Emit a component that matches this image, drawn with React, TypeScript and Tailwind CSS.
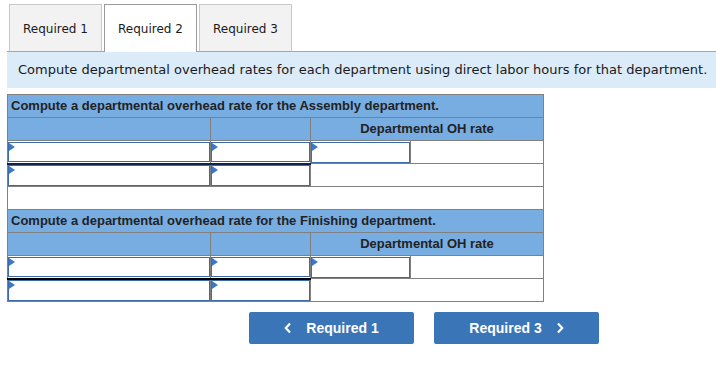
import React from 'react';

const tabs = ['Required 1', 'Required 2', 'Required 3'];

function Marker() {
  return (
    <span className="absolute left-0 top-0 h-0 w-0 border-y-[4px] border-l-[6px] border-y-transparent border-l-[#3a79c9]" />
  );
}

function InputCell() {
  return (
    <td className="p-0 border border-[#808080]">
      <div className="relative h-[21px] border border-[#3b6bab] bg-white">
        <Marker />
      </div>
    </td>
  );
}

function Section({ dept, darkLine }: { dept: string; darkLine: string }) {
  return (
    <>
      <tr className="h-[23px] bg-[#78ade2]">
        <td colSpan={4} className="border border-[#808080] px-[3px] text-[13px] font-bold text-[#222]">
          Compute a departmental overhead rate for the {dept} department.
        </td>
      </tr>
      <tr className="h-[23px] bg-[#78ade2]">
        <td className="border border-[#808080]" />
        <td className="border border-[#808080]" />
        <td colSpan={2} className="border border-[#808080] text-center text-[13px] font-bold text-[#222]">
          Departmental OH rate
        </td>
      </tr>
      <tr className="h-[23px]">
        <td className={`p-0 border border-[#808080] border-b-2 ${darkLine}`}>
          <div className="relative h-[20px] border border-[#3b6bab]">
            <Marker />
          </div>
        </td>
        <td className={`p-0 border border-[#808080] border-b-2 ${darkLine}`}>
          <div className="relative h-[20px] border border-[#3b6bab]">
            <Marker />
          </div>
        </td>
        <InputCell />
        <td className="border border-[#808080]" />
      </tr>
      <tr className="h-[23px]">
        <InputCell />
        <InputCell />
        <td colSpan={2} className="border border-[#808080]" />
      </tr>
    </>
  );
}

export default function App() {
  return (
    <div className="w-[716px] h-[377px] bg-white pl-[7px] pt-[4px] font-['DejaVu_Sans',Verdana,sans-serif] text-[#1a1a1a]">
      {/* Tab strip */}
      <div className="flex gap-[2px] pl-[2px] border-b border-[#a6a6a6]">
        {tabs.map((t, i) => (
          <div
            key={t}
            className={`w-[93px] flex items-center justify-center pt-[1px] text-[12px] border border-b-0 ${
              i === 1 ? 'bg-white border-[#9a9a9a] -mb-px h-[48px]' : 'bg-[#f2f2f2] border-[#c8c8c8] h-[47px]'
            }`}
          >
            {t}
          </div>
        ))}
      </div>

      {/* Instructions */}
      <div className="h-[36px] bg-[#dcebf8] pl-[11px] flex items-center text-[13px] text-[#1a1a1a]">
        Compute departmental overhead rates for each department using direct labor hours for that department.
      </div>

      {/* Answer grid */}
      <table className="mt-[6px] w-[536px] table-fixed border-collapse font-['Liberation_Sans',Arial,sans-serif]">
        <colgroup>
          <col className="w-[203px]" />
          <col className="w-[100px]" />
          <col className="w-[100px]" />
          <col className="w-[133px]" />
        </colgroup>
        <tbody>
          <Section dept="Assembly" darkLine="border-b-[#0d2452]" />
          <tr className="h-[23px]">
            <td colSpan={4} className="border border-[#808080]" />
          </tr>
          <Section dept="Finishing" darkLine="border-b-black" />
        </tbody>
      </table>

      {/* Navigation */}
      <div className="mt-[10px] ml-[242px] flex gap-[20px] font-['Liberation_Sans',Arial,sans-serif]">
        <button className="w-[165px] h-[32px] rounded-[2px] bg-[#3a75b8] text-white text-[14px] font-bold flex items-center justify-center gap-[14px]">
          <svg width="8" height="12" viewBox="0 0 8 12" fill="none">
            <path d="M6 1.5 1.8 6 6 10.5" stroke="white" strokeWidth="2.2" />
          </svg>
          <span>Required 1</span>
        </button>
        <button className="w-[165px] h-[32px] rounded-[2px] bg-[#3a75b8] text-white text-[14px] font-bold flex items-center justify-center gap-[14px]">
          <span>Required 3</span>
          <svg width="8" height="12" viewBox="0 0 8 12" fill="none">
            <path d="M2 1.5 6.2 6 2 10.5" stroke="white" strokeWidth="2.2" />
          </svg>
        </button>
      </div>
    </div>
  );
}
